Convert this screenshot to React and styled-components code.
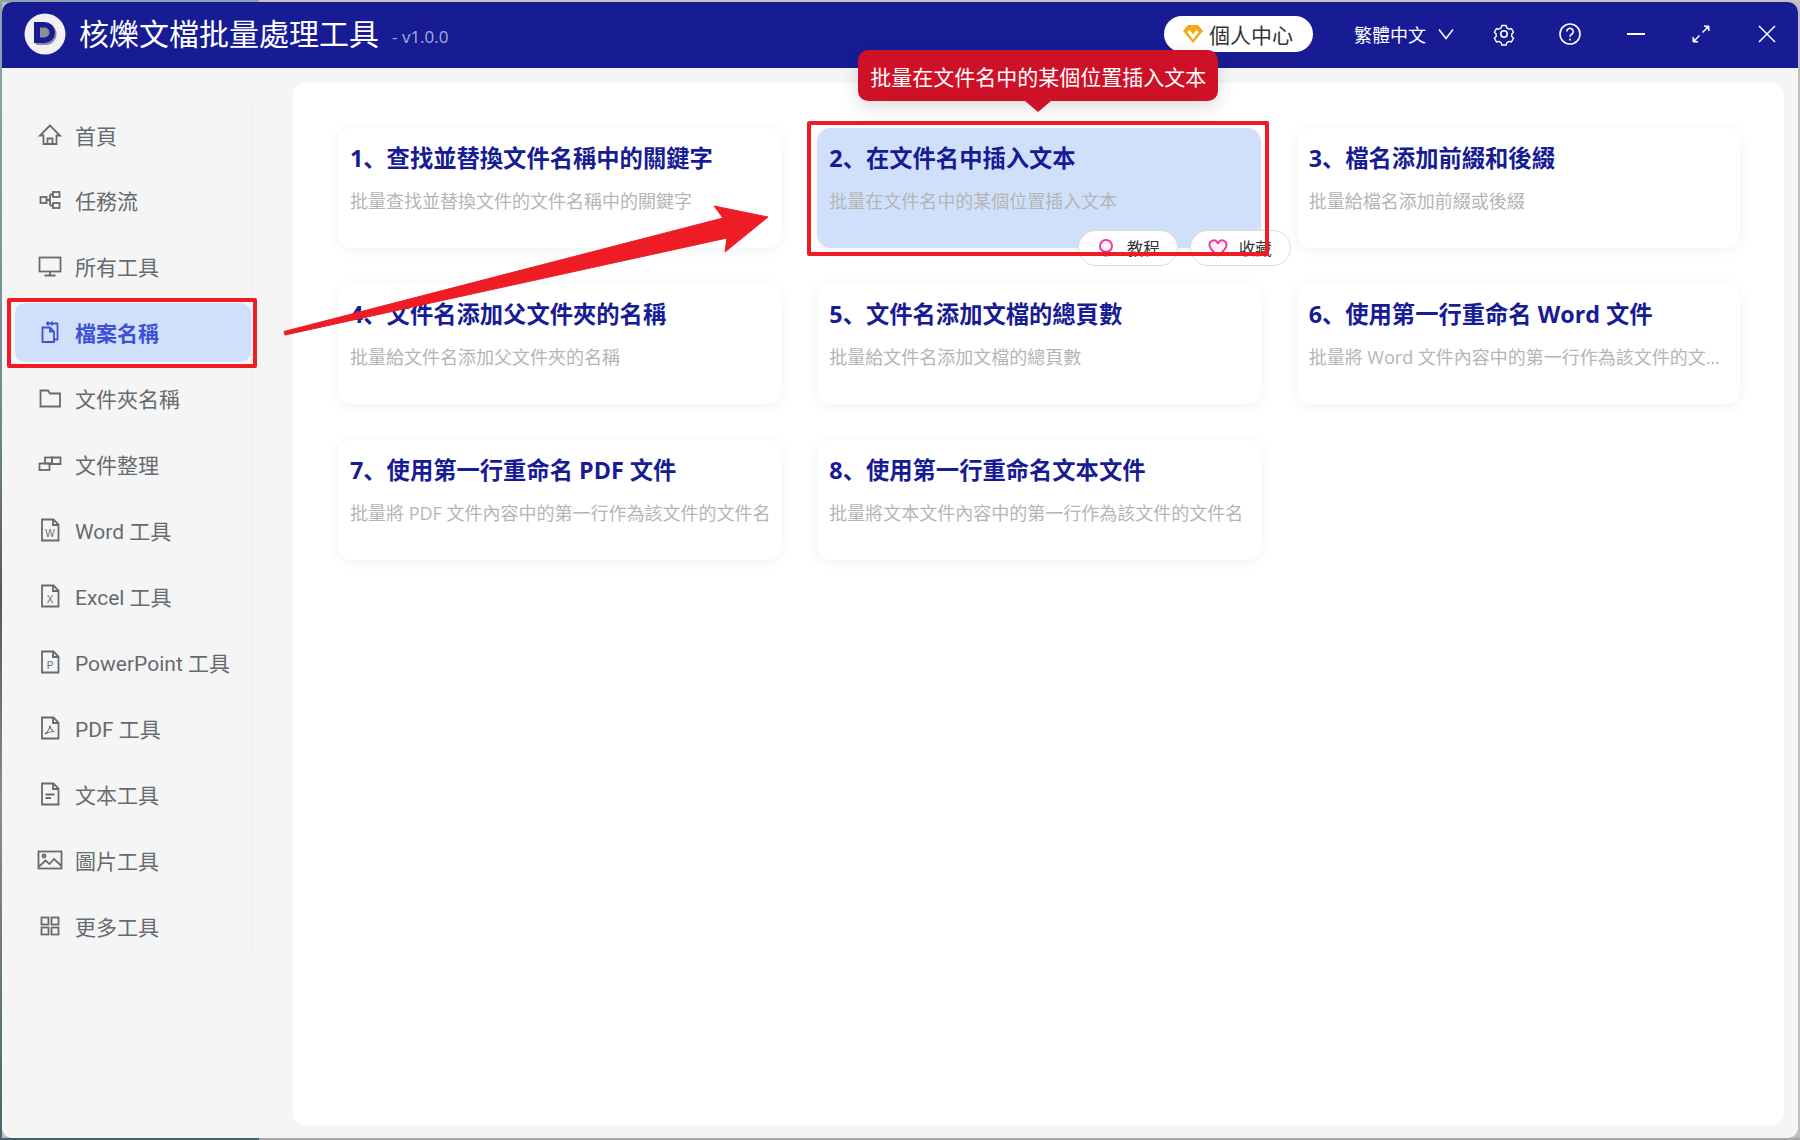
import React from "react";
import styled, { createGlobalStyle } from "styled-components";

const GlobalStyle = createGlobalStyle`
    * { box-sizing: border-box; }
    html, body { margin: 0; height: 100%; }
    body {
        font-family: "Open Sans", "Noto Sans CJK SC", sans-serif;
        background:
            linear-gradient(to bottom, #8fa5ad 0, #6f8a8c 420px, #565a4e 600px, #8d8a8a 800px, #46686c 1140px) left / 2px 100% no-repeat,
            linear-gradient(to right, #8ea3ab 0 259px, #c6c2c8 259px) top / 100% 2px no-repeat,
            linear-gradient(to right, #3f6266 0 259px, #a9a7a8 259px) bottom / 100% 2px no-repeat,
            #c0bdc0;
    }
`;

const Page = styled.div`
    width: 1800px;
    height: 1140px;
    padding: 2px;
    overflow: hidden;
`;

const Window = styled.div`
    position: relative;
    height: 1136px;
    background: #f5f5f5;
    border-radius: 10px;
    overflow: hidden;
    display: flex;
    flex-direction: column;
`;

const Header = styled.header`
    height: 66px;
    flex: none;
    background: #171c95;
    color: #fff;
    display: flex;
    align-items: center;
    padding: 0 19px 2px 22px;
`;

const LogoMark = styled.svg`
    width: 42px;
    height: 42px;
    flex: none;
`;

const AppTitle = styled.h1`
    margin: 0 0 0 13px;
    font-size: 30px;
    line-height: 40px;
    font-weight: 400;
`;

const Version = styled.span`
    margin-left: 13px;
    font-size: 17px;
    margin-top: 4px;
    color: #a9abd6;
`;

const HeaderRight = styled.div`
    margin-left: auto;
    display: flex;
    align-items: center;
`;

const UserPill = styled.div`
    width: 149px;
    height: 36px;
    margin-right: 41px;
    border-radius: 18px;
    background: #fff;
    color: #333;
    font-size: 21px;
    display: flex;
    align-items: center;
    padding-left: 18px;
    gap: 5px;
`;

const Lang = styled.div`
    font-size: 18px;
    width: 72px;
    white-space: nowrap;
`;

const HeaderIcon = styled.button`
    border: 0;
    padding: 0;
    background: none;
    color: #fff;
    width: 24px;
    height: 24px;
    margin-left: ${(p) => p.$gap}px;
    display: flex;
    align-items: center;
    justify-content: center;
`;

const Body = styled.div`
    flex: 1;
    display: flex;
    min-height: 0;
`;

const Sidebar = styled.aside`
    width: 291px;
    flex: none;
    padding: 30px 0 0 13px;
`;

const Nav = styled.nav`
    width: 237px;
    padding-top: 7px;
    border-right: 1px solid #f0f0f0;
    display: flex;
    flex-direction: column;
    gap: 6.95px;
`;

const NavItem = styled.div`
    position: relative;
    height: 59px;
    width: 236px;
    border-radius: 10px;
    display: flex;
    align-items: center;
    padding-left: 22px;
    gap: 12px;
    font-family: Roboto, "Noto Sans CJK SC", sans-serif;
    font-size: 21px;
    color: ${(p) => (p.$active ? "#3f51d3" : "#666b70")};
    font-weight: ${(p) => (p.$active ? 700 : 400)};
    background: ${(p) => (p.$active ? "#d0e0fb" : "transparent")};
`;

const NavIcon = styled.svg`
    width: 26px;
    height: 26px;
    flex: none;
    fill: none;
    stroke: currentColor;
    stroke-width: 1.8;
`;

const IconLetter = styled.text`
    font-family: "Liberation Sans", sans-serif;
    font-size: 10px;
    fill: currentColor;
    stroke: none;
    text-anchor: middle;
`;

const RedFrame = styled.div`
    position: absolute;
    top: ${(p) => p.$t}px;
    right: ${(p) => p.$r}px;
    bottom: ${(p) => p.$b}px;
    left: ${(p) => p.$l}px;
    border: 4px solid #ee1c25;
    border-radius: 2px;
    pointer-events: none;
    z-index: 5;
`;

const Main = styled.main`
    width: 1491px;
    margin: 15px 0 13px 0;
    background: #fff;
    border-radius: 12px;
    padding: 45px 44px 0 45px;
`;

const Grid = styled.div`
    display: grid;
    grid-template-columns: repeat(3, minmax(0, 1fr));
    grid-auto-rows: 120px;
    gap: 36px;
`;

const Card = styled.div`
    position: relative;
    min-width: 0;
    background: ${(p) => (p.$active ? "#d0e0fb" : "#fff")};
    border-radius: 14px;
    padding: 13px 10px 0 12px;
    box-shadow: 0 2px 14px rgba(0, 0, 0, 0.06);
`;

const CardTitle = styled.div`
    font-size: 23.3px;
    line-height: 34px;
    font-weight: 700;
    color: #171c95;
    white-space: nowrap;
`;

const CardDesc = styled.div`
    margin-top: 13px;
    font-size: 18px;
    line-height: 26px;
    color: #b5b5b5;
    white-space: nowrap;
    overflow: hidden;
    text-overflow: ellipsis;
`;

const Tooltip = styled.div`
    position: absolute;
    left: 41px;
    top: -78px;
    width: 360px;
    height: 51px;
    background: #cf1128;
    border-radius: 10px;
    color: #fff;
    font-size: 21px;
    display: flex;
    align-items: center;
    justify-content: center;
    box-shadow: 0 6px 18px rgba(0, 0, 0, 0.14);
    z-index: 4;

    &::after {
        content: "";
        position: absolute;
        left: 167px;
        bottom: -11px;
        border-left: 13px solid transparent;
        border-right: 13px solid transparent;
        border-top: 11px solid #cf1128;
    }
`;

const PillRow = styled.div`
    position: absolute;
    right: -30px;
    bottom: -18px;
    display: flex;
    gap: 12px;
    z-index: 3;
`;

const ActionPill = styled.div`
    width: ${(p) => p.$w}px;
    height: 36px;
    background: #fff;
    border: 1px solid #dcdcdc;
    border-radius: 18px;
    display: flex;
    align-items: center;
    padding-left: 17px;
    gap: 11px;
    font-size: 16.5px;
    color: #333;
`;

const PinkIcon = styled.svg`
    width: 20px;
    height: 20px;
    flex: none;
    fill: #fff0f8;
    stroke: #ea3c9b;
    stroke-width: 2;
`;

const ArrowOverlay = styled.svg`
    position: absolute;
    left: -2px;
    top: -2px;
    width: 1800px;
    height: 1140px;
    pointer-events: none;
    z-index: 6;
`;

const icons = {
    home: (
        <>
            <path d="M13 3.5 3 13.5h3.5V22h13v-8.500H23z" />
            <path d="M10.500 22v-5.500h5V22" />
        </>
    ),
    flow: (
        <>
            <rect x="3.500" y="10" width="6" height="6" />
            <rect x="16" y="5" width="6.500" height="5" />
            <rect x="16" y="16" width="6.500" height="5" />
            <path d="M9.500 13H13M13 7.500V18.500M13 7.500h3M13 18.500h3" />
        </>
    ),
    monitor: (
        <>
            <rect x="2.500" y="4.500" width="21" height="14" />
            <path d="M13 18.500V22.500M7.500 22.500h11" />
        </>
    ),
    docs: (
        <>
            <path d="M9 4.500H20.500V20.500H17" />
            <path d="M5.500 8.500H13l4 4V23H5.500z" />
            <path d="M11 2.500v4M15 2.500v4" />
            <path d="M13 8.500v4h4" />
        </>
    ),
    folder: <path d="M3.500 5.500h7.500l2 3h10v13H3.500z" />,
    blocks: (
        <>
            <rect x="2.500" y="12.500" width="10" height="6.500" />
            <rect x="8" y="6.500" width="7" height="6" />
            <path d="M15 6.500h8.500v6.500H15zM12.500 13H15" />
        </>
    ),
    word: "W",
    excel: "X",
    ppt: "P",
    pdf: (
        <>
            <path d="M5 2.500H16.500L21.500 7.500V23.500H5z" />
            <path d="M16 2.500v5.500h5.500" />
            <path d="M13 10.500c-.5 3-2.500 6.500-5 8.500 2.500-1.500 5.500-2.500 9-2.500-2-1-3.500-3-4-6z" strokeWidth="1.100" />
        </>
    ),
    text: (
        <>
            <path d="M5 2.500H16.500L21.500 7.500V23.500H5z" />
            <path d="M16 2.500v5.500h5.500" />
            <path d="M8.500 13.500h9M8.500 17h5.500" />
        </>
    ),
    image: (
        <>
            <rect x="1.500" y="4.500" width="23" height="17" />
            <circle cx="7" cy="9" r="1.500" />
            <path d="M2 19.500l6.500-6 4 3.500 4.500-5 7.500 7" />
        </>
    ),
    grid: (
        <>
            <rect x="4.500" y="4.500" width="7" height="7" />
            <rect x="14.500" y="4.500" width="7" height="7" />
            <rect x="4.500" y="14.500" width="7" height="7" />
            <rect x="14.500" y="14.500" width="7" height="7" />
        </>
    ),
};

function SideIcon({ name }) {
    const icon = icons[name];
    return (
        <NavIcon viewBox="0 0 26 26">
            {typeof icon === "string" ? (
                <>
                    <path d="M5 2.500H16.500L21.500 7.500V23.500H5z" />
                    <path d="M16 2.500v5.500h5.500" />
                    <IconLetter x="13" y="20">{icon}</IconLetter>
                </>
            ) : (
                icon
            )}
        </NavIcon>
    );
}

const menu = [
    ["home", "首頁"],
    ["flow", "任務流"],
    ["monitor", "所有工具"],
    ["docs", "檔案名稱", true],
    ["folder", "文件夾名稱"],
    ["blocks", "文件整理"],
    ["word", "Word 工具"],
    ["excel", "Excel 工具"],
    ["ppt", "PowerPoint 工具"],
    ["pdf", "PDF 工具"],
    ["text", "文本工具"],
    ["image", "圖片工具"],
    ["grid", "更多工具"],
];

const cards = [
    ["1、查找並替換文件名稱中的關鍵字", "批量查找並替換文件的文件名稱中的關鍵字"],
    ["2、在文件名中插入文本", "批量在文件名中的某個位置插入文本", true],
    ["3、檔名添加前綴和後綴", "批量給檔名添加前綴或後綴"],
    ["4、文件名添加父文件夾的名稱", "批量給文件名添加父文件夾的名稱"],
    ["5、文件名添加文檔的總頁數", "批量給文件名添加文檔的總頁數"],
    ["6、使用第一行重命名 Word 文件", "批量將 Word 文件內容中的第一行作為該文件的文件名"],
    ["7、使用第一行重命名 PDF 文件", "批量將 PDF 文件內容中的第一行作為該文件的文件名"],
    ["8、使用第一行重命名文本文件", "批量將文本文件內容中的第一行作為該文件的文件名"],
];

export default function App() {
    return (
        <Page>
            <GlobalStyle />
            <Window>
                <Header>
                    <LogoMark viewBox="0 0 42 42">
                        <circle cx="21" cy="21" r="20.500" fill="#f1f1f3" />
                        <path d="M11 10h10.500a11 11 0 0 1 0 22H13l-2-2z" fill="#8c8c98" />
                        <path d="M10 9h10.500a10.500 10.500 0 0 1 0 21H10zM16 14.500v10h4.500a5 5 0 0 0 0-10z" fill="#171c95" fillRule="evenodd" />
                    </LogoMark>
                    <AppTitle>核爍文檔批量處理工具</AppTitle>
                    <Version>- v1.0.0</Version>
                    <HeaderRight>
                        <UserPill>
                            <svg width="22" height="20" viewBox="0 0 22 20">
                                <path d="M6 1h10l5 6-10 12L1 7z" fill="#f4a916" />
                                <path d="M6.500 7l4.500 6 4.500-6" fill="none" stroke="#fff" strokeWidth="3" />
                            </svg>
                            個人中心
                        </UserPill>
                        <Lang>繁體中文</Lang>
                        <HeaderIcon $gap={8}>
                            <svg width="18" height="12" viewBox="0 0 18 12" fill="none" stroke="currentColor" strokeWidth="1.500">
                                <path d="M2 1.500l7 9 7-9" />
                            </svg>
                        </HeaderIcon>
                        <HeaderIcon $gap={34}>
                            <svg width="24" height="24" viewBox="0 0 24 24" fill="none" stroke="currentColor" strokeWidth="1.600" strokeLinejoin="round">
                                <path d="M9.500 2.500h5l.8 2.800 2.400 1.400 2.800-.7 2.400 4.200-2 2 0 2.800 2 2-2.400 4.200-2.800-.7-2.400 1.400-.8 2.800h-5l-.8-2.800-2.400-1.400-2.800.7-2.400-4.200 2-2 0-2.800-2-2 2.400-4.200 2.800.7 2.400-1.400z" transform="translate(1.400 1.300) scale(.88)" />
                                <circle cx="12" cy="12" r="3.200" />
                            </svg>
                        </HeaderIcon>
                        <HeaderIcon $gap={42}>
                            <svg width="24" height="24" viewBox="0 0 24 24" fill="none" stroke="currentColor" strokeWidth="1.600">
                                <circle cx="12" cy="12" r="10" />
                                <path d="M8.800 9.500a3.200 3.200 0 1 1 4.800 2.800c-1 .6-1.600 1.200-1.600 2.500" />
                                <path d="M12 16.500v2" />
                            </svg>
                        </HeaderIcon>
                        <HeaderIcon $gap={42}>
                            <svg width="20" height="4" viewBox="0 0 20 4" fill="currentColor">
                                <rect x="1" y="1" width="18" height="2" />
                            </svg>
                        </HeaderIcon>
                        <HeaderIcon $gap={41}>
                            <svg width="20" height="20" viewBox="0 0 20 20" fill="none" stroke="currentColor" strokeWidth="1.500">
                                <path d="M11.500 8.500l6-6M2.500 17.500l6-6" />
                                <path d="M13 2h5v5l-1.500-3.500zM2 13v5h5l-3.500-1.500z" fill="currentColor" strokeWidth="1" />
                            </svg>
                        </HeaderIcon>
                        <HeaderIcon $gap={42}>
                            <svg width="18" height="18" viewBox="0 0 18 18" fill="none" stroke="currentColor" strokeWidth="1.500">
                                <path d="M1 1l16 16M17 1L1 17" />
                            </svg>
                        </HeaderIcon>
                    </HeaderRight>
                </Header>
                <Body>
                    <Sidebar>
                        <Nav>
                            {menu.map(([icon, label, active]) => (
                                <NavItem key={label} $active={active}>
                                    <SideIcon name={icon} />
                                    {label}
                                    {active && <RedFrame $t={-5} $r={-6} $b={-6} $l={-8} />}
                                </NavItem>
                            ))}
                        </Nav>
                    </Sidebar>
                    <Main>
                        <Grid>
                            {cards.map(([title, desc, active]) => (
                                <Card key={title} $active={active}>
                                    <CardTitle>{title}</CardTitle>
                                    <CardDesc>{desc}</CardDesc>
                                    {active && (
                                        <>
                                            <Tooltip>{desc}</Tooltip>
                                            <PillRow>
                                                <ActionPill $w={100}>
                                                    <PinkIcon viewBox="0 0 20 20">
                                                        <circle cx="10" cy="8" r="6" />
                                                        <path d="M8 15.500h4v3H8z" stroke="none" fill="#ea3c9b" />
                                                    </PinkIcon>
                                                    教程
                                                </ActionPill>
                                                <ActionPill $w={101}>
                                                    <PinkIcon viewBox="0 0 20 20">
                                                        <path d="M10 17.500C4 13 1.500 10 1.500 7a4.300 4.300 0 0 1 8.500-1.200A4.300 4.300 0 0 1 18.500 7c0 3-2.500 6-8.500 10.500z" />
                                                    </PinkIcon>
                                                    收藏
                                                </ActionPill>
                                            </PillRow>
                                            <RedFrame $t={-7} $r={-8} $b={-8} $l={-10} />
                                        </>
                                    )}
                                </Card>
                            ))}
                        </Grid>
                    </Main>
                </Body>
                <ArrowOverlay viewBox="0 0 1800 1140">
                    <path d="M284 331.500L723 218 714 206 768 217 725 252 727 238 285 335z" fill="#ee1c25" stroke="#ee1c25" strokeWidth="1" strokeLinejoin="round" />
                </ArrowOverlay>
            </Window>
        </Page>
    );
}
